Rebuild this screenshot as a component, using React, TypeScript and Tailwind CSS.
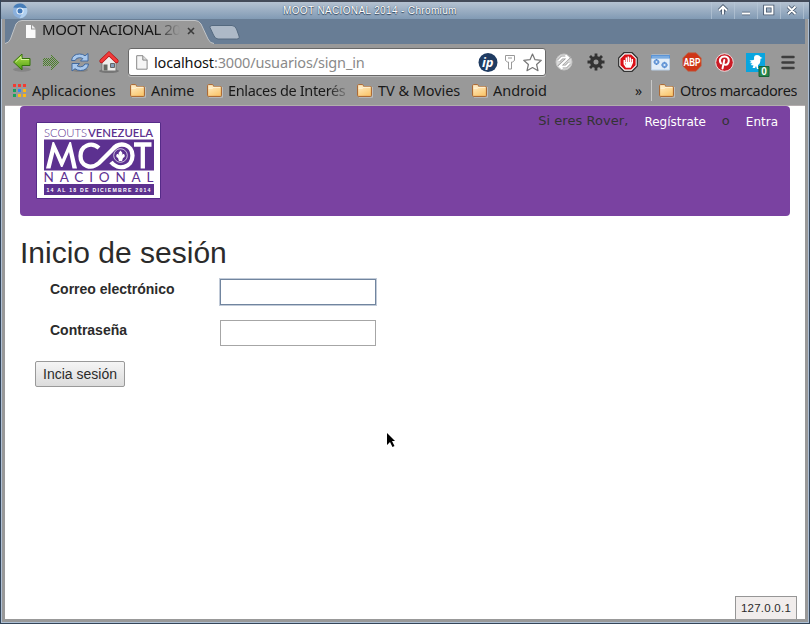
import type { ReactNode } from "react";

const ui = "font-['Noto_Sans','Open_Sans',sans-serif]";

function Folder() {
  return (
    <svg width="16" height="15" viewBox="0 0 16 15" className="block shrink-0">
      <defs>
        <linearGradient id="folder" x1="0" y1="0" x2="0.5" y2="1">
          <stop offset="0" stopColor="#fff0cf" />
          <stop offset="1" stopColor="#fbc972" />
        </linearGradient>
      </defs>
      <path d="M15.5 4v10.3H2" fill="none" stroke="#bdbdbd" />
      <path d="M.6 12.4V2.6Q.6 1.6 1.6 1.6h3.6q.9 0 1.2.9l.4 1h6.6q1 0 1 1v7.9q0 1-1 1H1.6q-1 0-1-1Z" fill="url(#folder)" stroke="#a9642d" />
      <path d="M1.6 5.2l4-.1 1.3-.9h6.4" fill="none" stroke="#fff7e0" />
    </svg>
  );
}

function PageIcon() {
  return (
    <svg width="12" height="15" viewBox="0 0 12 15" className="block shrink-0">
      <path d="M.7.7h6.2l4.2 4.2v9.3H.7Z" fill="#f5f5f5" stroke="#888" />
      <path d="M6.800.8v4.300h4.300" fill="#ddd" stroke="#888" />
    </svg>
  );
}

function Bookmark({ label, cls, text = "" }: { label: string; cls: string; text?: string }) {
  return (
    <div className={`flex shrink-0 items-center ${cls}`}>
      <Folder />
      <span className={`mb-0.5 ml-[5px] block overflow-hidden whitespace-nowrap ${text}`}>{label}</span>
    </div>
  );
}

function TitleBar() {
  return (
    <div className="flex h-[19px] items-center border-t-2 border-[#434a58] bg-linear-to-b from-[#b5c2d1] to-[#819ab4] pl-2.5">
      <svg width="18" height="16" viewBox="0 0 18 16" className="mr-auto shrink-0">
        <circle cx="9" cy="8" r="7.200" fill="#8bb0dc" />
        <path d="M2.200 4.500A7.500 7.500 0 0 1 15.800 5H9Z" fill="#477db8" />
        <path d="M9 5h6.800a7.400 7.400 0 0 1-7.200 10.200L12 9Z" fill="#b1d0ef" />
        <circle cx="9" cy="8" r="3.600" fill="#eaf3fb" />
        <circle cx="9" cy="8" r="2.500" fill="#4179bb" />
      </svg>
      <span className="mr-[254px] w-[174px] whitespace-nowrap font-['Liberation_Sans',sans-serif] text-[10px] leading-4 tracking-[0.36px] text-white [text-shadow:0_0_1px_#33475f,0_1px_1px_#33475f]">
        MOOT NACIONAL 2014 - Chromium
      </span>
      <svg width="98" height="17" viewBox="0 0 98 17" className="shrink-0" fill="none">
        <path d="M.5 0v17M23.500 0v17M46.500 0v17M69.500 0v17M92.500 0v17" stroke="#b9c7d7" opacity=".65" />
        <path d="M12 12.500V5M8 8.500l4-4 4 4M31 11.500h8M54 4.500h7.500v7H54ZM77 4.500l7.500 7.500M84.500 4.500L77 12" stroke="#46566b" strokeWidth="3.600" />
        <path d="M12 12.500V5M8 8.500l4-4 4 4M31 11.500h8M54 4.500h7.500v7H54ZM77 4.500l7.500 7.500M84.500 4.500L77 12" stroke="#fff" strokeWidth="1.900" />
      </svg>
    </div>
  );
}

function TabStrip() {
  return (
    <div className="relative h-[25px] bg-[#687d95]">
      <svg width="240" height="25" viewBox="0 0 240 25" className="absolute left-0 top-0">
        <path d="M0 24.500Q4 24 5.500 20L11 5Q13 1.500 17 1.500H190Q194 1.500 196 5L203 20Q205 24.500 209 24.500V26H0Z" fill="#999" />
        <path d="M0 24.500Q4 24 5.500 20L11 5Q13 1.500 17 1.500H190Q194 1.500 196 5L203 20Q205 24.500 209 24.500" fill="none" stroke="#c2c5c8" />
        <path d="M207 6.500H227Q230 6.500 231.500 10L234 17Q235 20 231.500 20H213Q210 20 208.500 16L205 8.500Q204.500 6.500 207 6.500Z" fill="#adb9c7" stroke="#54697f" />
      </svg>
      <div className="relative flex h-[22px] items-center pl-5">
        <svg width="11" height="13" viewBox="0 0 11 13" className="mt-0.5 shrink-0">
          <path d="M1 0h5v4.500h4.500V13H1Z" fill="#fafafa" />
          <path d="M7 0l3.500 3.500H7Z" fill="#eee" />
        </svg>
        <span className={`mb-0.5 ml-1.5 w-[138px] overflow-hidden whitespace-nowrap ${ui} text-[15px] leading-[22px] tracking-[-0.45px] text-[#151515] [mask-image:linear-gradient(to_right,#000_82%,transparent)]`}>
          MOOT NACIONAL 2014
        </span>
        <svg width="8" height="8" viewBox="0 0 8 8" className="ml-[7px] mt-0.5" stroke="#3c3c3c" strokeWidth="1.600">
          <path d="M1 1l6 6M7 1L1 7" />
        </svg>
      </div>
    </div>
  );
}

function Cell({ children }: { children: ReactNode }) {
  return <div className="relative flex h-9 w-8 shrink-0 items-center justify-center">{children}</div>;
}

function Toolbar() {
  return (
    <div className="flex h-9 items-center bg-[#999]">
      <svg width="123" height="32" viewBox="5 46 123 32" className="block shrink-0">
        <defs>
          <linearGradient id="grn" x1="0" y1="0" x2="0" y2="1">
            <stop offset="0" stopColor="#b6e54d" />
            <stop offset="1" stopColor="#4d9d13" />
          </linearGradient>
          <pattern id="dots" width="2" height="2" patternUnits="userSpaceOnUse">
            <path d="M0 0h1v1H0ZM1 1h1v1H1Z" fill="#4c8129" />
          </pattern>
        </defs>
        <ellipse cx="22" cy="69.500" rx="9" ry="2.200" fill="#666" opacity=".4" />
        <path d="M13.500 62L22 54v4.500h8v7h-8V70Z" fill="url(#grn)" stroke="#34720a" strokeLinejoin="round" />
        <path d="M15.500 62L21 56.800v2.700h8" fill="none" stroke="#d7f3a0" />
        <path d="M60 62L51 53.500V58h-8v8h8v4.500Z" fill="url(#dots)" shapeRendering="crispEdges" />
        <ellipse cx="80" cy="70" rx="8" ry="2" fill="#666" opacity=".4" />
        <g strokeLinejoin="round" fill="#a9c8ec" stroke="#38629b" strokeWidth=".9">
          <path d="M71.500 60.500Q72.500 54 79.500 54q3.500 0 5.500 1.800l3-2.300V61h-7.500l2.300-2.400q-1.300-.9-3.300-.9-3.500 0-4.300 2.800Z" />
          <path d="M88.500 64Q87.500 70.500 80.500 70.500q-3.500 0-5.500-1.800L72 71v-7.500h7.500l-2.300 2.400q1.300.9 3.300.9 3.500 0 4.300-2.800Z" />
        </g>
        <ellipse cx="109" cy="71" rx="10" ry="2" fill="#555" opacity=".5" />
        <path d="M102 61L109 54.500L116 61V71H102Z" fill="#eeeeec" stroke="#777" />
        <path d="M103.500 64.500h4v6h-4Z" fill="#666963" />
        <path d="M110.500 63.500h4v4h-4Z" fill="#86a0bd" stroke="#666" />
        <path d="M101.500 61L109 53.800L116.500 61" fill="none" stroke="#b01010" strokeWidth="4.200" strokeLinecap="round" />
        <path d="M101.500 61L109 53.800L116.500 61" fill="none" stroke="#f23b3b" strokeWidth="2.800" strokeLinecap="round" />
      </svg>
      <div className="flex h-[28px] w-[418px] shrink-0 items-center rounded-[3px] border border-[#686868] bg-white pl-[7px] shadow-[0_1px_0_#bababa]">
        <PageIcon />
        <span className={`ml-1.5 whitespace-nowrap ${ui} text-[14.500px] leading-[24px] tracking-[-0.15px] text-[#8a8a8a]`}>
          <span className="text-[#111]">localhost</span>:3000/usuarios/sign_in
        </span>
        <svg width="68" height="24" viewBox="477 50 68 24" className="ml-auto shrink-0">
          <circle cx="488" cy="62.500" r="9.500" fill="#203c62" />
          <text x="482" y="67" fontFamily="Open Sans" fontWeight="700" fontStyle="italic" fontSize="13" fill="#fff">ip</text>
          <path d="M505.500 55.500h9v5l-2 1.500h-1v7h-3v-7h-1l-2-1.500ZM508 58h4" fill="#fff" stroke="#999" />
          <path d="M532.500 54l2.500 5.700 6.300.6-4.700 4.200 1.400 6.200-5.500-3.200-5.500 3.200 1.400-6.200-4.700-4.200 6.300-.6Z" fill="#fff" stroke="#777" strokeWidth="1.200" strokeLinejoin="round" />
        </svg>
      </div>
      <div className="ml-0.5 flex">
        <Cell>
          <svg width="18" height="18" viewBox="0 0 18 18">
            <circle cx="9" cy="9" r="8" fill="#dadada" stroke="#c4c4c4" />
            <path d="M3.500 8l3.500-3.500h5M14.500 10L11 13.500H6M10.500 2L13.500 4.700 5 12.500l3 3" fill="none" stroke="#999" strokeWidth="3.400" />
            <path d="M3.500 8l3.500-3.500h6M14.500 10L11 13.500H5M10.500 2L13.500 4.700 4.500 13.300 7.500 16" fill="none" stroke="#fff" strokeWidth="2" />
          </svg>
        </Cell>
        <Cell>
          <svg width="18" height="18" viewBox="-9 -9 18 18">
            <path d="M0-8.500V8.500M-8.500 0H8.500M-6-6L6 6M6-6L-6 6" stroke="#333" strokeWidth="2.800" />
            <circle r="4.300" fill="none" stroke="#333" strokeWidth="3.600" />
            <circle r="2.500" fill="#999" />
          </svg>
        </Cell>
        <Cell>
          <svg width="20" height="20" viewBox="0 0 20 20">
            <path d="M6 .7h8L19.300 6v8L14 19.300H6L.7 14V6Z" fill="#fff" stroke="#333" strokeWidth="1.300" />
            <path d="M6.800 2.400h6.400l4.400 4.400v6.400l-4.400 4.400H6.800l-4.400-4.400V6.800Z" fill="#d90f16" />
            <path d="M6.300 8v4l2 3h4l2-4.500V7M8.300 5.500V11M10.300 4.500V11M12.300 5.500V11" fill="none" stroke="#fff" strokeWidth="1.500" />
            <path d="M7 10h7l-2 5H8.500Z" fill="#fff" />
          </svg>
        </Cell>
        <Cell>
          <svg width="19" height="17" viewBox="0 0 19 17">
            <path d="M.5 1h18v15H.5Z" fill="#e2edf8" stroke="#b9cfe7" />
            <path d="M0 1h19v3.500H0Z" fill="#5b94d6" />
            <path d="M1 3h17" stroke="#9cc3eb" />
            <g fill="none" stroke="#6b9bd8" strokeWidth="1.800">
              <circle cx="5.500" cy="8" r="1.800" />
              <circle cx="13.500" cy="11" r="2" />
            </g>
            <path d="M5.500 5v1M2.500 8h1M7.500 8h1M5.500 10v1M13.500 7.700v1M10.300 11h1M15.700 11h1M13.500 13.300v1" stroke="#4f88ce" strokeWidth="1.200" />
          </svg>
        </Cell>
        <Cell>
          <svg width="20" height="20" viewBox="0 0 20 20" className="overflow-visible">
            <path d="M6 .8h8L19.200 6v8L14 19.200H6L.8 14V6Z" fill="#cf3517" stroke="#b8684f" strokeWidth=".7" />
            <text x="1.500" y="14" fontFamily="Liberation Sans" fontWeight="700" fontSize="11" textLength="17" lengthAdjust="spacingAndGlyphs" fill="#fff">ABP</text>
          </svg>
        </Cell>
        <Cell>
          <svg width="19" height="19" viewBox="0 0 19 19">
            <circle cx="9.500" cy="9.500" r="8.800" fill="#ca1b25" stroke="#efdddd" />
            <path d="M9.300 7l-1.800 8.500M6 10.500C3.300 6.500 6 3.600 9.700 3.600c6 0 4.600 8.400.8 8.200-1.200 0-2-.7-2-1.500" fill="none" stroke="#fff" strokeWidth="2" strokeLinecap="round" />
          </svg>
        </Cell>
        <Cell>
          <svg width="26" height="26" viewBox="0 0 26 26" className="absolute left-[4px] top-[8px]">
            <path d="M2 1h19v19H2Z" fill="#08a5df" />
            <path d="M10 6q0-3 3-3 2.500 0 3.500 2l2 1-2 .7q0 5.300-2.500 6.300v3l2 1h-3l-1-3-1 2H8.500l1-2.500-3-.5 2-1.500-3-.5 2-1-2-1.500 4-.5q1-.5.5-2Z" fill="#fff" />
            <path d="M15 14.500h10v10H15Z" fill="#24854a" stroke="#176237" />
            <text x="17.200" y="23" fontFamily="Liberation Sans" fontWeight="700" fontSize="10" fill="#fff">0</text>
          </svg>
        </Cell>
        <Cell>
          <svg width="14" height="15" viewBox="0 0 14 15" stroke="#3d3d3d" strokeWidth="2.500" strokeLinecap="round">
            <path d="M1.500 2h11M1.500 7.500h11M1.500 13h11" />
          </svg>
        </Cell>
      </div>
    </div>
  );
}

function BookmarksBar() {
  return (
    <div className={`flex h-[26px] items-center border-b border-[#b3adae] bg-[#999] pb-1 pl-[7px] ${ui} text-[14.500px] leading-[20px] tracking-[-0.05px] text-[#191919]`}>
      <div className="flex w-[118px] shrink-0 items-center">
        <svg width="14" height="14" viewBox="0 0 14 14" className="shrink-0">
          <path d="M1 0h3v3H1ZM6 0h3v3H6ZM11 0h3v3h-3Z" fill="#f33b32" />
          <path d="M1 5h3v3H1ZM1 10h3v3H1Z" fill="#17a25c" />
          <path d="M6 5h3v3H6Z" fill="#3385f4" />
          <path d="M11 5h3v3h-3ZM6 10h3v3H6ZM11 10h3v3h-3Z" fill="#fdb813" />
        </svg>
        <span className="mb-0.5 ml-1.5">Aplicaciones</span>
      </div>
      <Bookmark label="Anime" cls="w-[77px]" />
      <Bookmark label="Enlaces de Interés" cls="w-[150px]" text="w-[119px] tracking-[-0.35px] [mask-image:linear-gradient(to_right,#000_84%,rgba(0,0,0,.2))]" />
      <Bookmark label="TV & Movies" cls="w-[115px]" />
      <Bookmark label="Android" cls="w-[162px]" />
      <span className="w-[17px] shrink-0 pl-px text-[14px]">»</span>
      <div className="mr-[7px] h-[21px] w-px shrink-0 bg-[#c8c8c8]" />
      <Bookmark label="Otros marcadores" cls="" text="tracking-[-0.35px]" />
    </div>
  );
}

function Logo() {
  return (
    <svg width="125" height="77" viewBox="0 0 125 77" className="block">
      <path d="M.5.500h124v76H.5Z" fill="#fff" stroke="#562b88" />
      <g fill="#5c3190" fontFamily="Lato">
        <text x="8" y="15" fontSize="12" fontWeight="300" textLength="43" lengthAdjust="spacingAndGlyphs">SCOUTS</text>
        <text x="52" y="15" fontSize="12" fontWeight="600" textLength="65" lengthAdjust="spacingAndGlyphs">VENEZUELA</text>
        <path d="M8 17.500h110v31H8ZM8 62h110v11H8Z" />
        <text x="7.500" y="60" fontSize="13.500" textLength="110">NACIONAL</text>
      </g>
      <path d="M10 46.500L16.500 20H18L26 37.500L33.500 20H35L41 46.500H36.500L33 30L26.500 45H25L18.500 30L14.500 46.500Z" fill="#fff" />
      <g fill="none" stroke="#fff" strokeWidth="4.300">
        <path d="M63 26C55 19 44.500 24 44.500 34C44.500 44 55 48 63 41L76 28C84 18 96.500 23 96.500 33.500C96.500 46 82 49 75 40" />
        <path d="M98 22.500H115.500M106.800 22.500V46.500" />
      </g>
      <circle cx="84.500" cy="33.500" r="6.800" fill="#5c3190" stroke="#fff" strokeWidth=".7" />
      <path d="M84.500 28.500L86.500 31L85.500 34Q86 31.500 88 32Q90 34.500 87 36L86 39H83L82 36Q79 34.500 81 32Q83 31.500 83.500 34L82.500 31Z" fill="#fff" />
      <text x="10.500" y="70" fontFamily="Liberation Sans" fontWeight="700" fontSize="5.200" textLength="104" fill="#fff">14 AL 18 DE DICIEMBRE 2014</text>
    </svg>
  );
}

export default function App() {
  return (
    <div className="flex h-[624px] w-[810px] flex-col overflow-hidden border-x border-b border-[#344559] bg-[#999]">
      <TitleBar />
      <div className="flex min-h-0 grow flex-col border-x border-b border-[#aec0d5]">
        <div className="flex min-h-0 grow flex-col border-x-[3px] border-b-[3px] border-[#999]">
          <TabStrip />
          <Toolbar />
          <BookmarksBar />
          <main className="relative min-h-0 grow bg-white px-[15px] font-['Liberation_Sans',Arial,sans-serif] text-[#2b2b2b]">
            <header className="flex h-[110px] items-start rounded-[4px] bg-[#7a42a1] pl-4 pt-4">
              <Logo />
              <nav className="-mt-4 ml-auto flex h-[30px] items-center pr-3 font-['DejaVu_Sans',sans-serif] text-[12px] text-[#333]">
                <span className="mr-4 text-[13px] tracking-[0.05px]">Si eres Rover,</span>
                <a className="pt-0.5 text-white">Regístrate</a>
                <span className="mx-4 text-[13px]">o</span>
                <a className="pt-0.5 text-white">Entra</a>
              </nav>
            </header>
            <h1 className="pt-[20px] text-[30px] leading-[33px]">Inicio de sesión</h1>
            <form className="text-[14px] leading-5">
              <div className="flex h-[41px] pl-[30px] pt-[10px]">
                <label className="w-[170px] font-bold">Correo electrónico</label>
                <div className="h-[26px] w-[156px] border border-[#71859f] bg-white shadow-[0_0_0_1px_#c2cbd8]" />
              </div>
              <div className="flex h-[41px] pl-[30px] pt-[10px]">
                <label className="w-[170px] font-bold">Contraseña</label>
                <div className="h-[26px] w-[156px] border border-[#a6a6a6]" />
              </div>
              <button type="button" className="ml-[15px] mt-[10px] block h-[26px] w-[90px] whitespace-nowrap rounded-[2px] border border-[#999] bg-linear-to-b from-[#f5f5f5] to-[#dcdcdc] text-center">Incia sesión</button>
            </form>
            <svg width="9" height="15" viewBox="0 0 9 15" className="absolute left-[382px] top-[327px]">
              <path d="M0 0L8 8H5L7.500 13L5.500 14L3 9L0 12Z" fill="#000" />
            </svg>
            <div className="absolute bottom-0 right-[8px] h-[23px] w-[62px] border border-b-0 border-[#969696] bg-[#f1edec] text-center text-[11.500px] leading-[22px] tracking-[0.25px]">127.0.0.1</div>
          </main>
        </div>
      </div>
    </div>
  );
}
